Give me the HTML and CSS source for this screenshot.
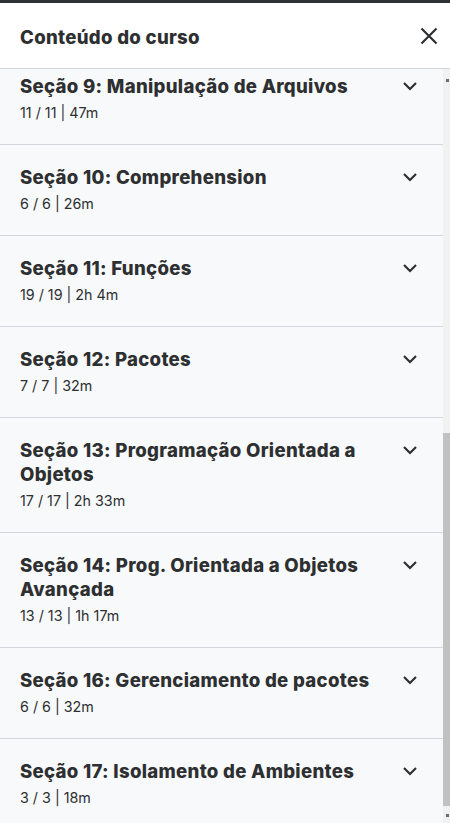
FILE: index.html
```html
<!DOCTYPE html>
<html lang="pt-BR">
<head>
<meta charset="utf-8">
<title>Conteúdo do curso</title>
<link rel="stylesheet" href="styles.css">
</head>
<body>
<div class="drawer">
  <header class="drawer-header">
    <h2 class="drawer-title">Conteúdo do curso</h2>
    <button class="close-btn" aria-label="Fechar">
      <svg viewBox="0 0 24 24" width="24" height="24"><path d="M4.5 4.5 L19.5 19.5 M19.5 4.5 L4.5 19.5" /></svg>
    </button>
  </header>
  <div class="drawer-body">
    <div class="sections">
      <div class="section first">
        <div class="section-text">
          <div class="section-title">Seção 9: Manipulação de Arquivos</div>
          <div class="section-meta">11 / 11 | 47m</div>
        </div>
        <svg class="chevron" viewBox="0 0 24 24" width="24" height="24"><path d="M6 9 L12 15 L18 9" /></svg>
      </div>
      <div class="section">
        <div class="section-text">
          <div class="section-title">Seção 10: Comprehension</div>
          <div class="section-meta">6 / 6 | 26m</div>
        </div>
        <svg class="chevron" viewBox="0 0 24 24" width="24" height="24"><path d="M6 9 L12 15 L18 9" /></svg>
      </div>
      <div class="section">
        <div class="section-text">
          <div class="section-title">Seção 11: Funções</div>
          <div class="section-meta">19 / 19 | 2h 4m</div>
        </div>
        <svg class="chevron" viewBox="0 0 24 24" width="24" height="24"><path d="M6 9 L12 15 L18 9" /></svg>
      </div>
      <div class="section">
        <div class="section-text">
          <div class="section-title">Seção 12: Pacotes</div>
          <div class="section-meta">7 / 7 | 32m</div>
        </div>
        <svg class="chevron" viewBox="0 0 24 24" width="24" height="24"><path d="M6 9 L12 15 L18 9" /></svg>
      </div>
      <div class="section">
        <div class="section-text">
          <div class="section-title">Seção 13: Programação Orientada a Objetos</div>
          <div class="section-meta">17 / 17 | 2h 33m</div>
        </div>
        <svg class="chevron" viewBox="0 0 24 24" width="24" height="24"><path d="M6 9 L12 15 L18 9" /></svg>
      </div>
      <div class="section">
        <div class="section-text">
          <div class="section-title">Seção 14: Prog. Orientada a Objetos Avançada</div>
          <div class="section-meta">13 / 13 | 1h 17m</div>
        </div>
        <svg class="chevron" viewBox="0 0 24 24" width="24" height="24"><path d="M6 9 L12 15 L18 9" /></svg>
      </div>
      <div class="section">
        <div class="section-text">
          <div class="section-title">Seção 16: Gerenciamento de pacotes</div>
          <div class="section-meta">6 / 6 | 32m</div>
        </div>
        <svg class="chevron" viewBox="0 0 24 24" width="24" height="24"><path d="M6 9 L12 15 L18 9" /></svg>
      </div>
      <div class="section">
        <div class="section-text">
          <div class="section-title">Seção 17: Isolamento de Ambientes</div>
          <div class="section-meta">3 / 3 | 18m</div>
        </div>
        <svg class="chevron" viewBox="0 0 24 24" width="24" height="24"><path d="M6 9 L12 15 L18 9" /></svg>
      </div>
    </div>
    <div class="scrollbar">
      <span class="arrow arrow-up"></span>
      <div class="thumb-area">
        <div class="thumb"></div>
      </div>
      <span class="arrow arrow-down"></span>
    </div>
  </div>
</div>
</body>
</html>
```
FILE: styles.css
```css
* { box-sizing: border-box; }
html, body {
  margin: 0;
  padding: 0;
  height: 100%;
  overflow: hidden;
}
body {
  font-family: Inter, "Noto Sans", sans-serif;
  color: #2d2f31;
  background: #ffffff;
}
.drawer {
  height: 823px;
  display: flex;
  flex-direction: column;
  border-top: 3px solid #2f3133;
}
.drawer-header {
  height: 66px;
  flex: none;
  display: flex;
  align-items: center;
  justify-content: space-between;
  padding: 0 9px 1px 20px;
  border-bottom: 1px solid #d1d7dc;
  background: #fff;
}
.drawer-title {
  margin: 0;
  font-size: 18.6px;
  font-weight: 800;
  line-height: 24px;
  letter-spacing: 0.3px;
  padding-top: 3px;
}
.close-btn {
  border: 0;
  background: none;
  padding: 0;
  width: 24px;
  height: 24px;
  display: flex;
  margin-top: 1px;
}
.close-btn svg path {
  stroke: #2d2f31;
  stroke-width: 2.2;
  fill: none;
}
.drawer-body {
  flex: 1;
  display: flex;
  min-height: 0;
  background: #f7f9fa;
}
.sections {
  flex: 1;
  overflow: hidden;
}
.section {
  display: flex;
  align-items: flex-start;
  padding: 20px 21px 21px 20px;
  border-bottom: 1px solid #d1d7dc;
  gap: 12px;
}
.section.first {
  margin-top: -15px;
}
.section-text {
  flex: 1;
}
.section-title {
  font-size: 18.6px;
  font-weight: 800;
  line-height: 24px;
  letter-spacing: 0.3px;
}
.section-meta {
  margin-top: 5px;
  font-size: 14.3px;
  line-height: 20px;
}
.chevron {
  flex: none;
}
.chevron path {
  stroke: #2d2f31;
  stroke-width: 2.2;
  fill: none;
}
.scrollbar {
  width: 7px;
  flex: none;
  background: #f1f1f1;
  display: flex;
  flex-direction: column;
  align-items: center;
}
.arrow {
  display: block;
  width: 3px;
  height: 3px;
  background: #6b6b6b;
  flex: none;
}
.arrow-up {
  margin-top: 10px;
  margin-left: 2px;
}
.arrow-down {
  margin-bottom: 6px;
  margin-left: 2px;
}
.thumb-area {
  flex: 1;
  width: 100%;
  padding-top: 351px;
  padding-bottom: 8px;
  display: flex;
  flex-direction: column;
}
.thumb {
  flex: 1;
  background: #c1c1c1;
}
```
